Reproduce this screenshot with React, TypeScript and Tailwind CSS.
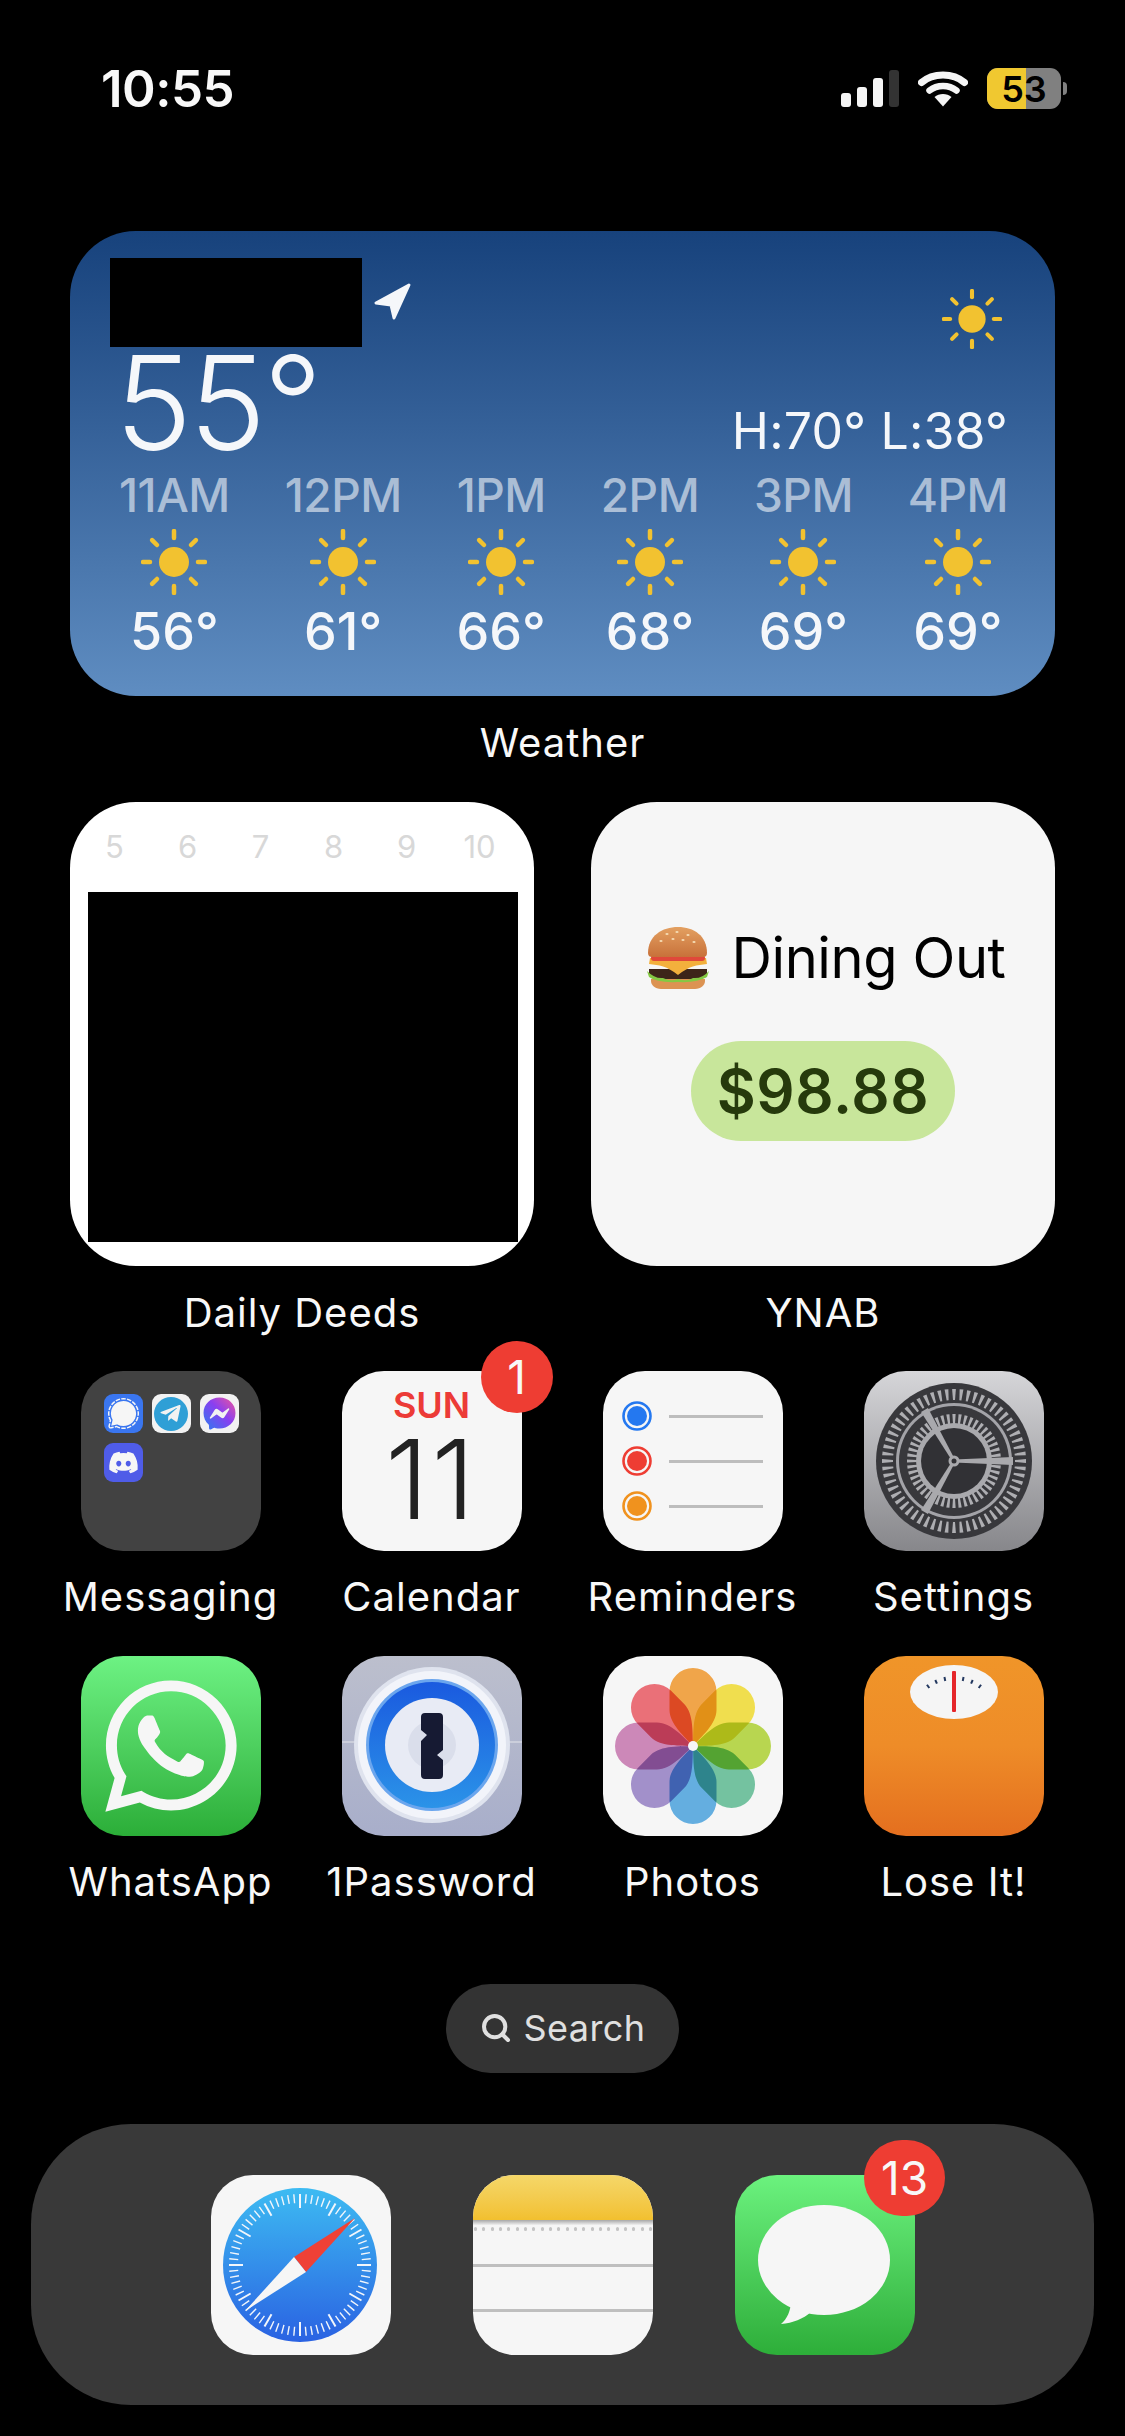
import React from "react";
import { FaWhatsapp, FaTelegramPlane, FaFacebookMessenger, FaDiscord } from "react-icons/fa";
import { SiSignal } from "react-icons/si";
import { Search } from "lucide-react";

const hours = [
  { time: "11AM", temp: "56°" },
  { time: "12PM", temp: "61°" },
  { time: "1PM", temp: "66°" },
  { time: "2PM", temp: "68°" },
  { time: "3PM", temp: "69°" },
  { time: "4PM", temp: "69°" },
];

const range = (n: number) => Array.from({ length: n }, (_, i) => i);

function Sun({ size }: { size: number }) {
  return (
    <svg width={size} height={size} viewBox="-33 -33 66 66">
      <circle r="15" fill="#f2c230" />
      {range(8).map((i) => (
        <line
          key={i}
          y1="-24"
          y2="-31"
          stroke="#f2c230"
          strokeWidth="4.5"
          strokeLinecap="round"
          transform={`rotate(${i * 45})`}
        />
      ))}
    </svg>
  );
}

function Signal() {
  return (
    <div className="flex items-end gap-[6px] h-[37px]">
      <div className="w-[10px] h-[14px] rounded-[3px] bg-[#f5f5f5]" />
      <div className="w-[10px] h-[20px] rounded-[3px] bg-[#f5f5f5]" />
      <div className="w-[10px] h-[29px] rounded-[3px] bg-[#f5f5f5]" />
      <div className="w-[10px] h-[37px] rounded-[3px] bg-[#333333]" />
    </div>
  );
}

function Wifi() {
  return (
    <svg width="50" height="37" viewBox="0 0 50 37" fill="none">
      <path d="M3.5 12.5 C15 2.5 35 2.5 46.5 12.5" stroke="#f5f5f5" strokeWidth="7" strokeLinecap="round" />
      <path d="M11.5 20.5 C19 14.5 31 14.5 38.5 20.5" stroke="#f5f5f5" strokeWidth="6.5" strokeLinecap="round" />
      <path d="M16.5 27 C21 23 29 23 33.5 27 L25 36.5 Z" fill="#f5f5f5" />
    </svg>
  );
}

function Battery() {
  return (
    <div className="flex items-center gap-[2px]">
      <div className="relative flex w-[74px] h-[41px] rounded-[11px] overflow-hidden bg-[#808080]">
        <div className="w-[39px] bg-[#f0c830]" />
        <span className="absolute inset-0 flex items-center justify-center text-[36px] font-semibold text-black">
          53
        </span>
      </div>
      <div className="w-[4px] h-[13px] rounded-r-full bg-[#808080]" />
    </div>
  );
}

function Burger() {
  return (
    <svg width="62" height="62" viewBox="0 0 62 62">
      <defs>
        <linearGradient id="bun" x1="0" y1="0" x2="0" y2="1">
          <stop offset="0" stopColor="#e3a061" />
          <stop offset="1" stopColor="#c8713a" />
        </linearGradient>
      </defs>
      <path d="M4 52 H58 V54 C58 58 54 62 48 62 H14 C8 62 4 58 4 54 Z" fill="#dc9352" />
      <path d="M2 42 H60 V48 C60 50 56 52 50 52 H12 C6 52 2 50 2 48 Z" fill="#3d2519" />
      <path d="M0 44 Q8 52 16 51 Q24 55 31 52 Q40 55 46 51 Q55 52 62 44 L60 50 Q50 56 31 55 Q10 56 2 50 Z" fill="#84c943" />
      <path d="M3 31 H59 L60 37 C50 38 42 39 31 48 C20 39 12 38 2 37 Z" fill="#f3b03c" />
      <rect x="4" y="28" width="54" height="6" rx="3" fill="#e0483a" />
      <path d="M1 26 C1 9 15 0 31 0 C47 0 60 9 60 26 C60 29 58 30 56 30 H5 C3 30 1 29 1 26 Z" fill="url(#bun)" />
      {[[20, 7], [30, 5], [41, 8], [14, 14], [26, 12], [36, 13], [47, 15]].map(([x, y]) => (
        <ellipse key={`${x}-${y}`} cx={x} cy={y} rx="1.6" ry="1" fill="#f6dcb4" />
      ))}
    </svg>
  );
}

function Tile({ className, children }: { className?: string; children?: React.ReactNode }) {
  return (
    <div className={`relative w-[180px] h-[180px] rounded-[42px] overflow-hidden ${className ?? ""}`}>
      {children}
    </div>
  );
}

function MiniApp({ className, children }: { className: string; children: React.ReactNode }) {
  return (
    <div className={`flex items-center justify-center w-[39px] h-[39px] rounded-[9px] ${className}`}>
      {children}
    </div>
  );
}

function FolderIcon() {
  return (
    <Tile className="bg-[#424242] p-[23px]">
      <svg width="0" height="0" className="absolute">
        <defs>
          <linearGradient id="messenger" x1="0" y1="1" x2="1" y2="0">
            <stop offset="0" stopColor="#2b7cf0" />
            <stop offset="0.55" stopColor="#8a3ff0" />
            <stop offset="1" stopColor="#f0569a" />
          </linearGradient>
        </defs>
      </svg>
      <div className="grid grid-cols-[39px_39px_39px] gap-x-[9px] gap-y-[10px]">
        <MiniApp className="bg-[#3a76f0]">
          <SiSignal size={31} color="#f6f6f6" />
        </MiniApp>
        <MiniApp className="bg-[#f2f2f2]">
          <div className="flex items-center justify-center w-[34px] h-[34px] rounded-full bg-[#2f9fd6]">
            <FaTelegramPlane size={23} color="#f2f2f2" className="mr-[2px]" />
          </div>
        </MiniApp>
        <MiniApp className="bg-[#f2f2f2]">
          <FaFacebookMessenger size={33} className="[&_path]:fill-[url(#messenger)]" />
        </MiniApp>
        <MiniApp className="bg-[#4f5ce8]">
          <FaDiscord size={31} color="#f6f6f6" />
        </MiniApp>
      </div>
    </Tile>
  );
}

function CalendarIcon() {
  return (
    <Tile className="bg-[#f6f6f6] flex flex-col items-center">
      <span className="mt-[16px] text-[36px] leading-[36px] font-semibold text-[#ec3b37]">SUN</span>
      <span className="mt-[16px] text-[110px] leading-[80px] font-light tracking-[3px] text-[#222222]">11</span>
    </Tile>
  );
}

function RemindersIcon() {
  const dots = ["#2478f0", "#ee3d33", "#f0921e"];
  return (
    <Tile className="bg-[#f6f6f6] flex flex-col gap-[15px] pt-[30px] pl-[19px] pr-[20px]">
      {dots.map((color) => (
        <div key={color} className="flex items-center gap-[17px]">
          <svg width="30" height="30" viewBox="0 0 30 30" className="shrink-0">
            <circle cx="15" cy="15" r="13.5" fill="none" stroke={color} strokeWidth="2.6" />
            <circle cx="15" cy="15" r="10" fill={color} />
          </svg>
          <div className="h-[3px] flex-1 bg-[#bdbdbd]" />
        </div>
      ))}
    </Tile>
  );
}

function SettingsIcon() {
  return (
    <Tile className="bg-gradient-to-b from-[#d6d6d9] to-[#87878b]">
      <svg width="180" height="180" viewBox="-90 -90 180 180">
        <circle r="78" fill="#38383c" />
        {range(60).map((i) => (
          <path key={i} d="M-1 -61 L-1.9 -72 H1.9 L1 -61 Z" fill="#aeaeb2" transform={`rotate(${i * 6})`} />
        ))}
        <circle r="60" fill="#38383c" />
        <circle r="58" fill="#a3a3a8" />
        <circle r="55" fill="#38383c" />
        {range(48).map((i) => (
          <path key={i} d="M-1 -37 L-1.6 -47 H1.6 L1 -37 Z" fill="#aeaeb2" transform={`rotate(${i * 7.5})`} />
        ))}
        <circle r="38" fill="#a9a9ad" />
        <circle r="33" fill="#313135" />
        {[0, 120, 240].map((a) => (
          <path key={a} d="M-1.5 0 L-4 -59 H4 L1.5 0 Z" fill="#a9a9ad" transform={`rotate(${a + 90})`} />
        ))}
        <circle r="5.5" fill="#a9a9ad" />
        <circle r="2.5" fill="#313135" />
      </svg>
    </Tile>
  );
}

function WhatsAppIcon() {
  return (
    <Tile className="bg-gradient-to-b from-[#6df283] to-[#2bae38] flex items-center justify-center">
      <FaWhatsapp size={150} color="#f6f6f6" />
    </Tile>
  );
}

function OnePasswordIcon() {
  return (
    <Tile className="bg-gradient-to-b from-[#bcbfcd] to-[#a8aeca]">
      <svg width="180" height="180" viewBox="0 0 180 180">
        <defs>
          <linearGradient id="opBlue" x1="0" y1="0" x2="0" y2="1">
            <stop offset="0" stopColor="#1a5adf" />
            <stop offset="1" stopColor="#2b93e8" />
          </linearGradient>
        </defs>
        <line x1="0" y1="86" x2="180" y2="86" stroke="#d3d6e0" strokeWidth="1.5" />
        <circle cx="90" cy="89" r="78" fill="#dfe3ee" />
        <circle cx="90" cy="89" r="74" fill="#f2f4fa" />
        <circle cx="90" cy="89" r="66" fill="#6ba6ee" />
        <circle cx="90" cy="89" r="63" fill="url(#opBlue)" />
        <circle cx="90" cy="89" r="47" fill="#e8ebf5" />
        <circle cx="90" cy="89" r="24" fill="#dadeeb" />
        <path
          d="M83 57 Q79 57 79 61 V74 L85 79 L79 85 V119 Q79 123 83 123 H97 Q101 123 101 119 V104 L95 99 L101 94 V61 Q101 57 97 57 Z"
          fill="#161a33"
        />
      </svg>
    </Tile>
  );
}

function PhotosIcon() {
  const petals = ["#f0a54a", "#f0de4e", "#b8d650", "#74c2a0", "#64aee0", "#a290ca", "#cc88b8", "#ea7078"];
  return (
    <Tile className="bg-[#f6f6f6]">
      <svg width="180" height="180" viewBox="-90 -90 180 180" className="isolate">
        {petals.map((color, i) => (
          <path
            key={color}
            d="M0 0 C-8 -9 -23.5 -22 -23.5 -36 V-54.5 A23.5 23.5 0 0 1 23.5 -54.5 V-36 C23.5 -22 8 -9 0 0 Z"
            fill={color}
            transform={`rotate(${i * 45})`}
            className="mix-blend-multiply"
          />
        ))}
        <circle r="5" fill="#f6f6f6" />
      </svg>
    </Tile>
  );
}

function LoseItIcon() {
  return (
    <Tile className="bg-gradient-to-b from-[#f09529] via-[#ee8c28] to-[#e46f1f]">
      <svg width="180" height="180" viewBox="0 0 180 180">
        <ellipse cx="90" cy="36" rx="44" ry="27" fill="#f5f5f5" />
        {[-36, -24, -12, 12, 24, 36].map((a) => (
          <line
            key={a}
            x1="90"
            y1="20"
            x2="90"
            y2="24"
            stroke="#23385f"
            strokeWidth="2"
            transform={`rotate(${a} 90 66)`}
          />
        ))}
        <rect x="88" y="15" width="4" height="41" rx="1" fill="#e5262a" />
      </svg>
    </Tile>
  );
}

function SafariIcon() {
  return (
    <Tile className="bg-[#f6f6f6]">
      <svg width="180" height="180" viewBox="0 0 180 180">
        <defs>
          <linearGradient id="safari" x1="0" y1="0" x2="0" y2="1">
            <stop offset="0" stopColor="#3dbbf2" />
            <stop offset="1" stopColor="#2a62e2" />
          </linearGradient>
        </defs>
        <circle cx="89" cy="90" r="77" fill="url(#safari)" />
        {range(72).map((i) => (
          <line
            key={i}
            x1="89"
            y1="19"
            x2="89"
            y2={i % 6 === 0 ? 33 : 28}
            stroke="#f2f6fb"
            strokeWidth={i % 6 === 0 ? 2 : 1.4}
            transform={`rotate(${i * 5} 89 90)`}
          />
        ))}
        <polygon points="144,43 83,82 95,97" fill="#ef4136" />
        <polygon points="34,136 83,82 95,97" fill="#f6f6f6" />
      </svg>
    </Tile>
  );
}

function NotesIcon() {
  return (
    <Tile className="bg-[#f6f6f6]">
      <div className="h-[45px] bg-gradient-to-b from-[#f5d768] to-[#f2c02e]" />
      <div className="h-[5px] bg-gradient-to-b from-[#a8a8a8] to-[#f0f0f0]" />
      <div className="flex justify-between px-[1px] mt-[2px]">
        {range(22).map((i) => (
          <div key={i} className="w-[3px] h-[4px] rounded-full bg-[#c4c4c4]" />
        ))}
      </div>
      <div className="h-[3px] mt-[33px] bg-[#bfbfbf]" />
      <div className="h-[3px] mt-[42px] bg-[#bfbfbf]" />
    </Tile>
  );
}

function MessagesIcon() {
  return (
    <Tile className="bg-gradient-to-b from-[#6bf27e] to-[#2dae39]">
      <svg width="180" height="180" viewBox="0 0 180 180">
        <ellipse cx="89" cy="85" rx="66" ry="55" fill="#f6f6f6" />
        <path d="M56 125 C56 136 52 144 46 149 C58 148 68 144 76 137 Z" fill="#f6f6f6" />
      </svg>
    </Tile>
  );
}

function Badge({ children, className }: { children: React.ReactNode; className: string }) {
  return (
    <div className={`absolute flex items-center justify-center rounded-full bg-[#ee3d33] text-[#f8f8f8] ${className}`}>
      {children}
    </div>
  );
}

const apps: { name: string; icon: React.ReactNode; badge?: string }[] = [
  { name: "Messaging", icon: <FolderIcon /> },
  { name: "Calendar", icon: <CalendarIcon />, badge: "1" },
  { name: "Reminders", icon: <RemindersIcon /> },
  { name: "Settings", icon: <SettingsIcon /> },
  { name: "WhatsApp", icon: <WhatsAppIcon /> },
  { name: "1Password", icon: <OnePasswordIcon /> },
  { name: "Photos", icon: <PhotosIcon /> },
  { name: "Lose It!", icon: <LoseItIcon /> },
];

function Label({ children, className }: { children: React.ReactNode; className?: string }) {
  return (
    <div className={`h-[50px] flex items-center justify-center whitespace-nowrap text-[40px] tracking-[1px] text-[#f8f8f8] ${className ?? ""}`}>
      {children}
    </div>
  );
}

export default function App() {
  return (
    <div className="w-[1125px] h-[2436px] bg-black flex flex-col overflow-hidden font-['Inter',sans-serif]">
      <div className="flex items-center justify-between h-[41px] mt-[68px] pl-[101px] pr-[58px]">
        <span className="pt-[2px] text-[51px] font-semibold tracking-[-0.5px] text-[#f8f8f8]">10:55</span>
        <div className="flex items-center gap-[19px]">
          <Signal />
          <Wifi />
          <Battery />
        </div>
      </div>

      <div className="mt-[122px] mx-[70px] h-[465px] rounded-[66px] bg-gradient-to-b from-[#17427c] to-[#5f8dc1] text-[#f5f7fa]">
        <div className="flex items-start pt-[27px] pl-[40px] pr-[53px] h-[116px]">
          <div className="w-[252px] h-[89px] bg-black" />
          <svg width="38" height="37" viewBox="0 0 38 37" className="mt-[25px] ml-[11px]">
            <path d="M36 2 L3 20 L18 22 L21 35 Z" fill="#f5f7fa" stroke="#f5f7fa" strokeWidth="3" strokeLinejoin="round" />
          </svg>
          <div className="ml-auto mt-[31px]">
            <Sun size={60} />
          </div>
        </div>
        <div className="flex items-end justify-between pl-[45px] pr-[47px] h-[121px]">
          <span className="text-[130px] leading-[100px] font-light tracking-[-3px] mb-[15px]">55°</span>
          <span className="text-[50px] leading-[50px] tracking-[0.2px] mb-[12px]">H:70° L:38°</span>
        </div>
        <div className="flex justify-between pl-[49px] pr-[47px]">
          {hours.map((h) => (
            <div key={h.time} className="flex flex-col items-center">
              <span className="h-[54px] flex items-center text-[46px] font-medium tracking-[-0.5px] text-[#f5f7fa]/60">{h.time}</span>
              <div className="mt-[7px] mb-[10px]">
                <Sun size={66} />
              </div>
              <span className="h-[54px] flex items-center text-[52px] font-medium">{h.temp}</span>
            </div>
          ))}
        </div>
      </div>
      <Label className="mt-[22px]">Weather</Label>

      <div className="flex justify-between mt-[34px] mx-[70px]">
        <div className="w-[464px]">
          <div className="h-[464px] rounded-[66px] bg-white flex flex-col">
            <div className="grid grid-cols-6 pl-[8px] pr-[18px] h-[90px] items-center">
              {[5, 6, 7, 8, 9, 10].map((d) => (
                <span key={d} className="text-center text-[31px] text-[#d8d8d8]">
                  {d}
                </span>
              ))}
            </div>
            <div className="ml-[18px] mr-[16px] h-[350px] bg-black" />
          </div>
          <Label className="mt-[22px]">Daily Deeds</Label>
        </div>
        <div className="w-[464px]">
          <div className="h-[464px] rounded-[66px] bg-[#f6f6f6] flex flex-col items-center">
            <div className="flex items-center gap-[22px] mt-[121px] ml-[7px]">
              <Burger />
              <span className="text-[56px] leading-[70px] tracking-[-0.4px] text-black">Dining Out</span>
            </div>
            <div className="flex items-center justify-center w-[264px] h-[100px] mt-[48px] rounded-full bg-[#c8e69b] text-[60px] font-semibold tracking-[0.6px] text-[#263a0c]">
              $98.88
            </div>
          </div>
          <Label className="mt-[22px]">YNAB</Label>
        </div>
      </div>

      <div className="grid grid-cols-[261px_261px_261px_261px] gap-y-[34px] mt-[33px] ml-[40px]">
        {apps.map((app) => (
          <div key={app.name} className="flex flex-col items-center">
            <div className="relative">
              {app.icon}
              {app.badge && (
                <Badge className="w-[72px] h-[72px] -top-[30px] -right-[31px] text-[46px]">{app.badge}</Badge>
              )}
            </div>
            <Label className="mt-[21px]">{app.name}</Label>
          </div>
        ))}
      </div>

      <div className="flex items-center justify-center gap-[12px] self-center w-[233px] h-[89px] mt-[77px] pb-[2px] rounded-full bg-[#333333] text-[36px] tracking-[0.4px] text-[#e0e0e0]">
        <Search size={32} strokeWidth={3} />
        <span>Search</span>
      </div>

      <div className="flex items-center justify-center gap-[82px] mt-[51px] mx-[31px] h-[281px] rounded-[100px] bg-[#393939] pl-[1px] pt-[1px]">
        <SafariIcon />
        <NotesIcon />
        <div className="relative">
          <MessagesIcon />
          <Badge className="w-[81px] h-[76px] -top-[35px] -right-[30px] text-[46px]">13</Badge>
        </div>
      </div>
    </div>
  );
}
